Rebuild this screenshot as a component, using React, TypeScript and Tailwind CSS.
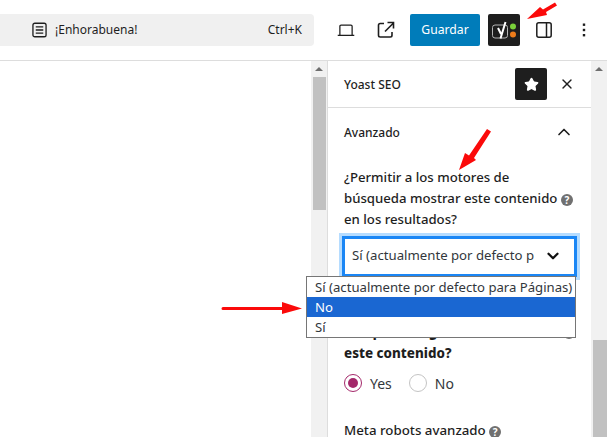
import { ChevronDown, ChevronUp, X, Star } from 'lucide-react'

// ── Small drawings ────────────────────────────────────────────────────────────

function DocIcon() {
  return (
    <svg viewBox="0 0 16 16" className="w-[15px] h-[16px]" fill="none" stroke="#1e1e1e" strokeWidth="1.4">
      <rect x="1" y="0.8" width="14" height="14.4" rx="2" />
      <path d="M4 4.7h8M4 8h8M4 11.3h8" />
    </svg>
  )
}

function LaptopIcon() {
  return (
    <svg viewBox="0 0 20 14" className="w-[18px] h-[13px]" fill="none" stroke="#1e1e1e" strokeWidth="1.4">
      <path d="M3.2 12.2V2.2A1.3 1.3 0 0 1 4.5 0.9h11a1.3 1.3 0 0 1 1.3 1.3v10" />
      <path d="M0.8 12.4h18.4" />
    </svg>
  )
}

function ExternalIcon() {
  return (
    <svg viewBox="0 0 18 18" className="w-[18px] h-[18px]" fill="none" stroke="#1e1e1e" strokeWidth="1.6">
      <path d="M7 2.5H3.2A1.7 1.7 0 0 0 1.5 4.2v10.1A1.7 1.7 0 0 0 3.2 16h10.1a1.7 1.7 0 0 0 1.7-1.7V11" />
      <path d="M8 10.5 16 2.5M10.5 1.5h6v6" />
    </svg>
  )
}

function PanelIcon() {
  return (
    <svg viewBox="0 0 16 16" className="w-4 h-4" fill="none" stroke="#1e1e1e" strokeWidth="1.5">
      <rect x="0.8" y="0.8" width="14.4" height="14.4" rx="2" />
      <path d="M10.5 1v14" />
    </svg>
  )
}

function DotsIcon() {
  return (
    <svg viewBox="0 0 4 16" className="w-1 h-4" fill="#1e1e1e">
      <rect x="0.8" y="1.5" width="2.4" height="2.4" />
      <rect x="0.8" y="6.8" width="2.4" height="2.4" />
      <rect x="0.8" y="12" width="2.4" height="2.4" />
    </svg>
  )
}

function YoastLogo() {
  return (
    <svg viewBox="0 0 32 32" className="w-8 h-8">
      <rect x="4.5" y="11" width="15" height="13" rx="2.5" fill="none" stroke="#b5b5b5" strokeWidth="1" />
      <path d="M10 14 13 20 M17.5 8 12.5 24.5" fill="none" stroke="#fff" strokeWidth="2" />
      <circle cx="25" cy="12.5" r="3" fill="#7ad03a" />
      <circle cx="25" cy="20.5" r="3" fill="#ee7c1b" />
    </svg>
  )
}

function HelpIcon() {
  return (
    <span className="inline-flex w-[12px] h-[12px] rounded-full bg-[#707070] text-white text-[10px] font-bold items-center justify-center leading-none align-[-1px]">
      ?
    </span>
  )
}

function ScrollUp() {
  return <div className="mx-auto w-0 h-0 border-x-[4px] border-x-transparent border-b-[4px] border-b-[#6e6e6e]" />
}

// ── Page ──────────────────────────────────────────────────────────────────────

export default function App() {
  return (
    <div className="relative w-[607px] h-[437px] overflow-hidden bg-white text-[#1e1e1e] font-['Noto_Sans',sans-serif]">
      {/* Top bar */}
      <header className="h-[61px] border-b border-[#dddddd] flex items-center">
        <div className="w-[314px] h-8 bg-[#f0f0f0] rounded-r-[4px] flex items-center pl-[32px] pr-[12px] text-[12px]">
          <DocIcon />
          <span className="ml-[8px] flex-1">¡Enhorabuena!</span>
          <span>Ctrl+K</span>
        </div>
        <div className="ml-[23px]"><LaptopIcon /></div>
        <div className="ml-[22px]"><ExternalIcon /></div>
        <button className="ml-[15px] w-[70px] h-8 rounded-[2px] bg-[#007cba] text-white text-[12.2px]">Guardar</button>
        <div className="ml-2 w-8 h-8 rounded-[2px] bg-[#1e1e1e]"><YoastLogo /></div>
        <div className="ml-4"><PanelIcon /></div>
        <div className="ml-[30px]"><DotsIcon /></div>
      </header>

      <div className="flex h-[376px]">
        <main className="w-[311px]" />

        {/* Editor scrollbar */}
        <div className="w-[16px] bg-[#f1f1f1] pt-[6px]">
          <ScrollUp />
          <div className="ml-[2px] mt-[6px] w-[13px] h-[133px] bg-[#c1c1c1]" />
        </div>

        {/* Sidebar */}
        <aside className="w-[264px] border-l border-[#dddddd]">
          <div className="h-[47px] border-b border-[#dddddd] flex items-center pl-[16px] pr-[16px]">
            <span className="flex-1 text-[12px] font-medium pt-[1px]">Yoast SEO</span>
            <div className="w-8 h-8 rounded-[2px] bg-[#1e1e1e] flex items-center justify-center">
              <Star className="w-[15px] h-[15px]" fill="white" color="white" />
            </div>
            <X className="ml-[12px] w-4 h-4" strokeWidth={2} />
          </div>

          <div className="pl-[16px] pr-[16px]">
            <div className="flex items-center justify-between h-[48px] text-[12px] font-medium">
              <span className="pt-[1px]">Avanzado</span>
              <ChevronUp className="w-5 h-5 mr-[1px]" strokeWidth={2} />
            </div>

            <p className="mt-[11px] text-[13.2px] leading-[21px] font-medium whitespace-nowrap">
              ¿Permitir a los motores de
              <br />
              búsqueda mostrar este contenido <HelpIcon />
              <br />
              en los resultados?
            </p>

            <div className="mt-[6px] -ml-[2px] w-[235px] h-[41px] border-[3px] border-[#1a86f5] ring-[3px] ring-[#b5dcff] flex items-center pl-[7px] pr-[12px] pb-[2px] text-[13.2px] text-[#32373c]">
              <span className="w-[182px] overflow-hidden whitespace-nowrap">Sí (actualmente por defecto para Páginas)</span>
              <ChevronDown className="ml-auto w-[18px] h-[18px]" strokeWidth={3} color="#111" />
            </div>

            {/* Upper line sits behind the open list */}
            <div className="mt-[45px] text-[13.4px] leading-[21px] font-extrabold">
              <p className="flex justify-between items-center">
                <span>búsqueda seguir los enlaces en</span>
                <HelpIcon />
              </p>
              <p>este contenido?</p>
            </div>

            <div className="mt-[10px] flex items-center h-[18px] text-[14px] text-[#32373c]">
              <span className="w-[18px] h-[18px] rounded-full border border-[#a4286a] flex items-center justify-center">
                <span className="w-[10px] h-[10px] rounded-full bg-[#a4286a]" />
              </span>
              <span className="ml-[8px]">Yes</span>
              <span className="ml-[17px] w-[18px] h-[18px] rounded-full border border-[#c4c4c4]" />
              <span className="ml-[8px]">No</span>
            </div>

            <p className="mt-[28px] text-[13.3px] font-medium leading-[21px] whitespace-nowrap">
              Meta robots avanzado <HelpIcon />
            </p>
          </div>
        </aside>

        {/* Sidebar scrollbar */}
        <div className="w-[16px] bg-[#f1f1f1] pt-[6px]">
          <ScrollUp />
          <div className="ml-[2px] mt-[269px] w-[14px] h-[97px] bg-[#c1c1c1]" />
        </div>
      </div>

      {/* Open select list */}
      <ul className="absolute left-[306px] top-[276px] w-[270px] border border-[#767676] bg-white text-[13.15px] leading-[20px] text-[#32373c]">
        <li className="h-5 pl-[8px] whitespace-nowrap">Sí (actualmente por defecto para Páginas)</li>
        <li className="h-5 pl-[8px] bg-[#1a67d2] text-white">No</li>
        <li className="h-5 pl-[8px]">Sí</li>
      </ul>

      {/* Red annotation arrows */}
      <svg viewBox="0 0 34 20" className="absolute left-[525px] top-[1px] w-[34px] h-5" fill="#fb0a0a">
        <path d="M2 18 15 6 18 8.5 30 1.5 32 4.5 21 11 22 14Z" />
      </svg>
      <svg viewBox="0 0 36 45" className="absolute left-[457px] top-[127px] w-9 h-[45px]" fill="#fb0a0a">
        <path d="M2 43 8 26 12 28.5 30 2 34 4.5 17 31 19 33Z" />
      </svg>
      <svg viewBox="0 0 82 15" className="absolute left-[221px] top-[301px] w-[82px] h-[15px]" fill="#fb0a0a">
        <path d="M2 6H61V1L81 7.5 61 13V9H2A1.5 1.5 0 0 1 2 6Z" />
      </svg>
    </div>
  )
}
